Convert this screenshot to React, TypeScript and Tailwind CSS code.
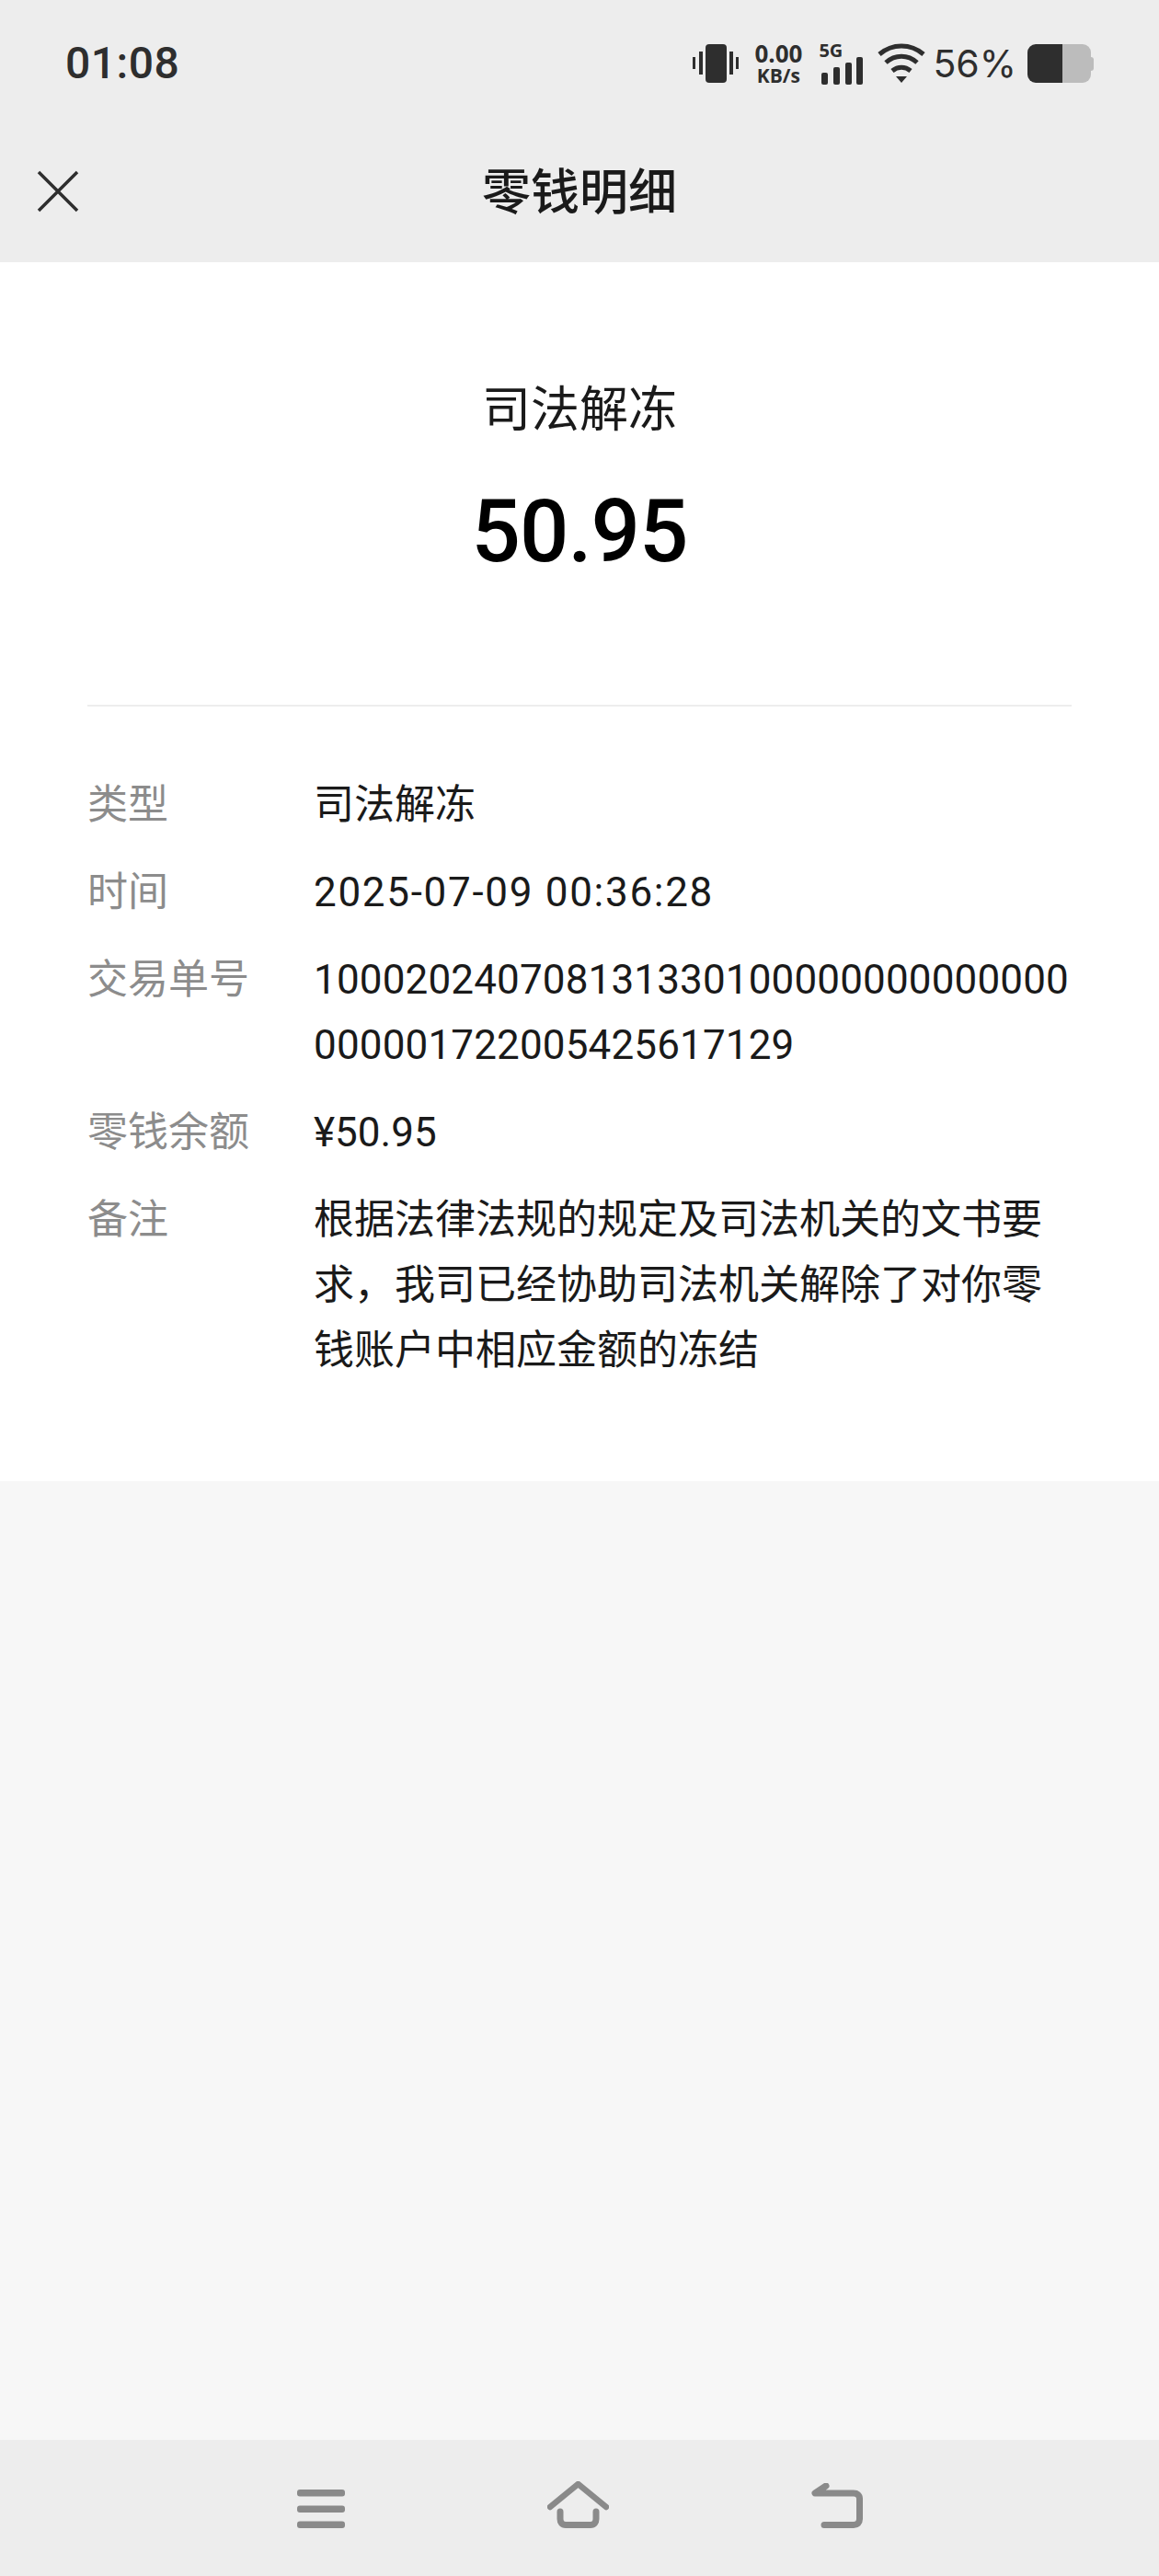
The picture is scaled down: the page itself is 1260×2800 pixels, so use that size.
const cjk = 'font-["Roboto","Noto_Sans_CJK_SC",sans-serif]';

function StatusIcons() {
  return (
    <div className="flex items-center text-[#2e2e2e]">
      <svg width="52" height="44" viewBox="0 0 52 44" fill="currentColor">
        <rect x="1" y="15" width="3" height="13" />
        <rect x="8" y="9" width="4" height="25" />
        <rect x="15" y="1" width="23" height="42" rx="4" />
        <rect x="41" y="9" width="4" height="25" />
        <rect x="48" y="15" width="3" height="13" />
      </svg>
      <div className="ml-[15px] w-[54px] flex flex-col items-center font-['Open_Sans',sans-serif] font-bold">
        <span className="text-[26px] leading-[26px]">0.00</span>
        <span className="text-[21px] leading-[22px]">KB/s</span>
      </div>
      <div className="ml-[17px] flex flex-col">
        <span className="text-[20px] leading-[18px] font-bold font-['Open_Sans',sans-serif]">5G</span>
        <svg width="48" height="30" viewBox="0 0 48 30" fill="currentColor" className="mt-[-2px]">
          <rect x="3" y="17" width="7" height="13" rx="2" />
          <rect x="16" y="11" width="7" height="19" rx="2" />
          <rect x="29" y="6" width="7" height="24" rx="2" />
          <rect x="41" y="0" width="7" height="30" rx="2" />
        </svg>
      </div>
      <svg width="52" height="44" viewBox="0 0 52 44" fill="none" stroke="currentColor" strokeWidth="5" className="ml-[16px]">
        <path d="M2 12C16 0 36 0 50 12" />
        <path d="M9 21C19 12 33 12 43 21" />
        <path d="M16 30C22 25 30 25 36 30" />
        <path d="M20 36H32L26 43Z" fill="currentColor" stroke="none" />
      </svg>
      <span className="ml-[8px] text-[41px] leading-none font-['Inter',sans-serif]">56%</span>
      <div className="ml-[12px] flex items-center">
        <div className="w-[38px] h-[42px] rounded-l-[9px] bg-[#2e2e2e]" />
        <div className="w-[31px] h-[42px] rounded-r-[9px] bg-[#bcbcbc]" />
        <div className="w-[3px] h-[15px] rounded-r-[3px] bg-[#bcbcbc]" />
      </div>
    </div>
  );
}

function NavBar() {
  return (
    <div className="mt-auto h-[148px] bg-[#ededed] flex items-start justify-center gap-[220px] pt-[45px] text-[#8a8a8a]">
      <svg width="52" height="42" viewBox="0 0 52 42" fill="currentColor" className="mt-[9px]">
        <rect x="0" y="0" width="52" height="7.5" rx="3" />
        <rect x="0" y="17.5" width="52" height="7.5" rx="3" />
        <rect x="0" y="34.5" width="52" height="7.5" rx="3" />
      </svg>
      <svg width="67" height="51" viewBox="0 0 67 51" fill="none" stroke="currentColor" strokeLinecap="round" strokeLinejoin="round">
        <path d="M3 28L33.5 3L64 28" strokeWidth="6.5" />
        <path d="M14 33V41C14 45 16 47.5 20 47.5H47C51 47.5 53 45 53 41V33" strokeWidth="7" />
      </svg>
      <svg width="56" height="49" viewBox="0 0 56 49" fill="none" stroke="currentColor" strokeLinecap="round" strokeLinejoin="round" className="mt-[2px]">
        <path d="M16 3L4 11H46C50 11 52.5 13 52.5 17V39C52.5 43 50 45.5 46 45.5H14" strokeWidth="7" />
      </svg>
    </div>
  );
}

const rows = [
  { label: '类型', value: '司法解冻', extra: '' },
  { label: '时间', value: '2025-07-09 00:36:28', extra: 'tracking-[1.7px]' },
  { label: '交易单号', value: '100020240708131330100000000000000000001722005425617129', extra: 'tracking-[0.15px]' },
  { label: '零钱余额', value: '¥50.95', extra: '' },
  { label: '备注', value: '根据法律法规的规定及司法机关的文书要求，我司已经协助司法机关解除了对你零钱账户中相应金额的冻结', extra: '' },
];

export default function App() {
  return (
    <div className={`w-[1260px] h-[2800px] flex flex-col bg-[#f7f7f7] ${cjk}`}>
      <div className="h-[285px] bg-[#ededed]">
        <div className="h-[138px] pl-[71px] pr-[71px] flex items-center justify-between">
          <span className="text-[48px] leading-none font-medium text-[#2e2e2e] tracking-[0.5px]">01:08</span>
          <StatusIcons />
        </div>
        <div className="relative h-[147px] flex items-center justify-center">
          <svg width="48" height="48" viewBox="0 0 48 48" fill="none" stroke="#2e2e2e" strokeWidth="3.5" className="absolute left-[39px] top-[46px]">
            <path d="M3 3L45 45M45 3L3 45" />
          </svg>
          <span className="text-[53px] leading-none font-medium text-[#1a1a1a] -mt-[3px]">零钱明细</span>
        </div>
      </div>
      <div className="h-[1325px] bg-white px-[95px]">
        <div className="h-[483px] border-b-2 border-[#ededed] flex flex-col items-center pt-[131px]">
          <span className="text-[53px] leading-[60px] text-[#1a1a1a]">司法解冻</span>
          <span className="mt-[55px] text-[94px] leading-none font-medium text-black tracking-[-1px]">50.95</span>
        </div>
        <div className="pt-[72px]">
          {rows.map(r => (
            <div key={r.label} className="flex mb-[24px] text-[44px] leading-[71px]">
              <span className="w-[246px] shrink-0 text-[#8c8c8c]">{r.label}</span>
              <span className={`flex-1 break-all text-[#1a1a1a] min-w-0 ${r.extra}`}>{r.value}</span>
            </div>
          ))}
        </div>
      </div>
      <NavBar />
    </div>
  );
}
